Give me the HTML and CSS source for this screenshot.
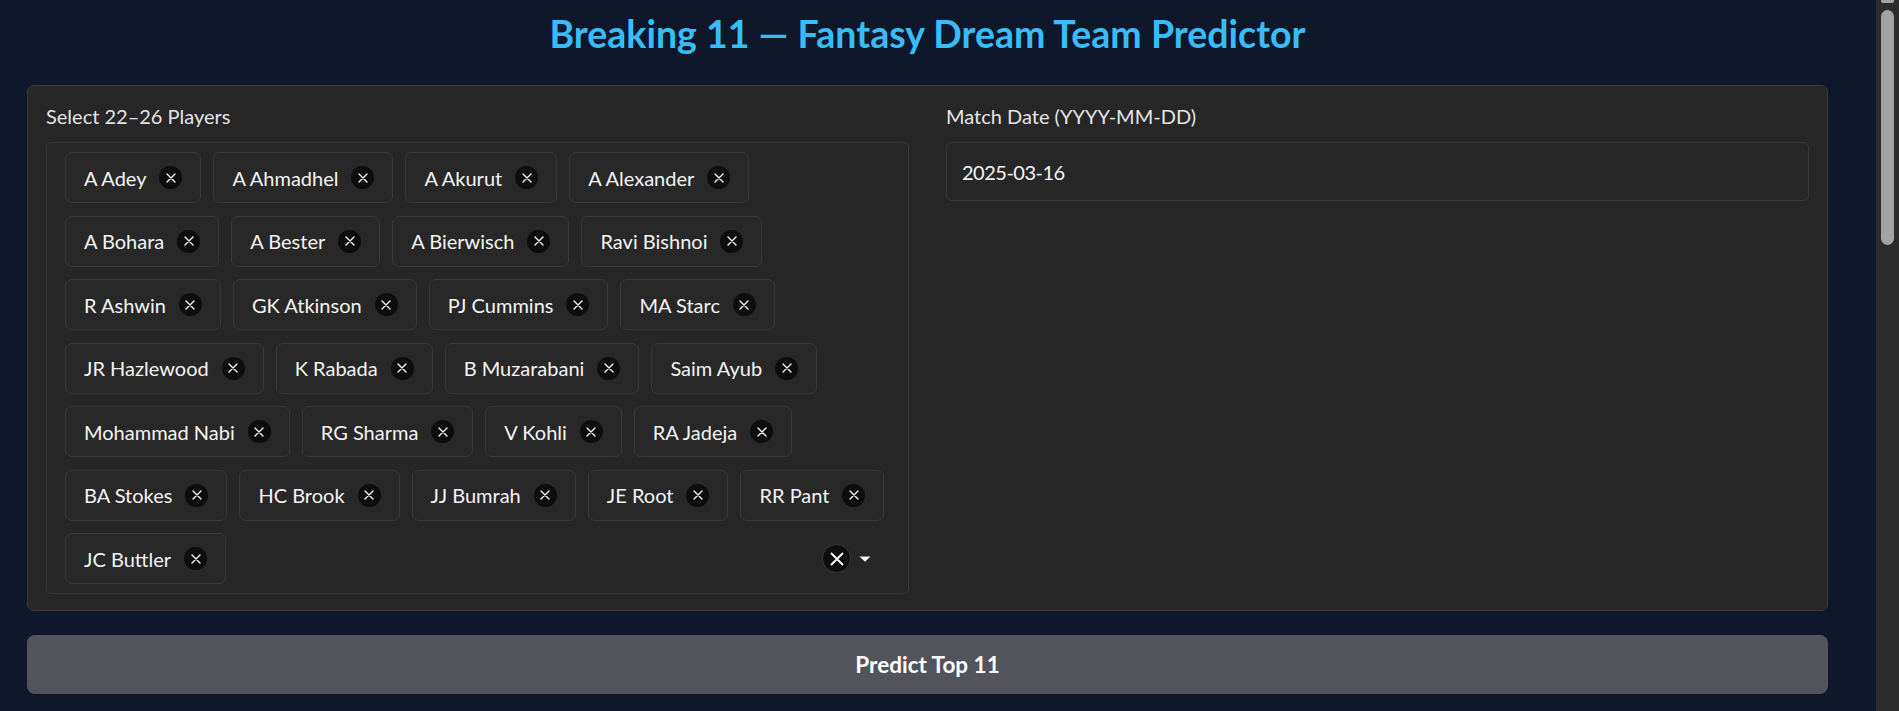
FILE: index.html
```html
<!DOCTYPE html>
<html lang="en">
<head>
<meta charset="utf-8">
<title>Breaking 11 — Fantasy Dream Team Predictor</title>
<link rel="stylesheet" href="styles.css">
</head>
<body>
<div class="page">
  <main class="app">
    <h1 class="title">Breaking 11 — Fantasy Dream Team Predictor</h1>
    <section class="panel">
      <div class="field">
        <label class="label">Select 22–26 Players</label>
        <div class="multiselect">
          <div class="row">
            <span class="chip"><span class="chip-text">A Adey</span><span class="chip-x"><svg viewBox="0 0 10 10" width="10" height="10"><path d="M1 1L9 9M9 1L1 9"/></svg></span></span>
            <span class="chip"><span class="chip-text">A Ahmadhel</span><span class="chip-x"><svg viewBox="0 0 10 10" width="10" height="10"><path d="M1 1L9 9M9 1L1 9"/></svg></span></span>
            <span class="chip"><span class="chip-text">A Akurut</span><span class="chip-x"><svg viewBox="0 0 10 10" width="10" height="10"><path d="M1 1L9 9M9 1L1 9"/></svg></span></span>
            <span class="chip"><span class="chip-text">A Alexander</span><span class="chip-x"><svg viewBox="0 0 10 10" width="10" height="10"><path d="M1 1L9 9M9 1L1 9"/></svg></span></span>
          </div>
          <div class="row">
            <span class="chip"><span class="chip-text">A Bohara</span><span class="chip-x"><svg viewBox="0 0 10 10" width="10" height="10"><path d="M1 1L9 9M9 1L1 9"/></svg></span></span>
            <span class="chip"><span class="chip-text">A Bester</span><span class="chip-x"><svg viewBox="0 0 10 10" width="10" height="10"><path d="M1 1L9 9M9 1L1 9"/></svg></span></span>
            <span class="chip"><span class="chip-text">A Bierwisch</span><span class="chip-x"><svg viewBox="0 0 10 10" width="10" height="10"><path d="M1 1L9 9M9 1L1 9"/></svg></span></span>
            <span class="chip"><span class="chip-text">Ravi Bishnoi</span><span class="chip-x"><svg viewBox="0 0 10 10" width="10" height="10"><path d="M1 1L9 9M9 1L1 9"/></svg></span></span>
          </div>
          <div class="row">
            <span class="chip"><span class="chip-text">R Ashwin</span><span class="chip-x"><svg viewBox="0 0 10 10" width="10" height="10"><path d="M1 1L9 9M9 1L1 9"/></svg></span></span>
            <span class="chip"><span class="chip-text">GK Atkinson</span><span class="chip-x"><svg viewBox="0 0 10 10" width="10" height="10"><path d="M1 1L9 9M9 1L1 9"/></svg></span></span>
            <span class="chip"><span class="chip-text">PJ Cummins</span><span class="chip-x"><svg viewBox="0 0 10 10" width="10" height="10"><path d="M1 1L9 9M9 1L1 9"/></svg></span></span>
            <span class="chip"><span class="chip-text">MA Starc</span><span class="chip-x"><svg viewBox="0 0 10 10" width="10" height="10"><path d="M1 1L9 9M9 1L1 9"/></svg></span></span>
          </div>
          <div class="row">
            <span class="chip"><span class="chip-text">JR Hazlewood</span><span class="chip-x"><svg viewBox="0 0 10 10" width="10" height="10"><path d="M1 1L9 9M9 1L1 9"/></svg></span></span>
            <span class="chip"><span class="chip-text">K Rabada</span><span class="chip-x"><svg viewBox="0 0 10 10" width="10" height="10"><path d="M1 1L9 9M9 1L1 9"/></svg></span></span>
            <span class="chip"><span class="chip-text">B Muzarabani</span><span class="chip-x"><svg viewBox="0 0 10 10" width="10" height="10"><path d="M1 1L9 9M9 1L1 9"/></svg></span></span>
            <span class="chip"><span class="chip-text">Saim Ayub</span><span class="chip-x"><svg viewBox="0 0 10 10" width="10" height="10"><path d="M1 1L9 9M9 1L1 9"/></svg></span></span>
          </div>
          <div class="row">
            <span class="chip"><span class="chip-text">Mohammad Nabi</span><span class="chip-x"><svg viewBox="0 0 10 10" width="10" height="10"><path d="M1 1L9 9M9 1L1 9"/></svg></span></span>
            <span class="chip"><span class="chip-text">RG Sharma</span><span class="chip-x"><svg viewBox="0 0 10 10" width="10" height="10"><path d="M1 1L9 9M9 1L1 9"/></svg></span></span>
            <span class="chip"><span class="chip-text">V Kohli</span><span class="chip-x"><svg viewBox="0 0 10 10" width="10" height="10"><path d="M1 1L9 9M9 1L1 9"/></svg></span></span>
            <span class="chip"><span class="chip-text">RA Jadeja</span><span class="chip-x"><svg viewBox="0 0 10 10" width="10" height="10"><path d="M1 1L9 9M9 1L1 9"/></svg></span></span>
          </div>
          <div class="row">
            <span class="chip"><span class="chip-text">BA Stokes</span><span class="chip-x"><svg viewBox="0 0 10 10" width="10" height="10"><path d="M1 1L9 9M9 1L1 9"/></svg></span></span>
            <span class="chip"><span class="chip-text">HC Brook</span><span class="chip-x"><svg viewBox="0 0 10 10" width="10" height="10"><path d="M1 1L9 9M9 1L1 9"/></svg></span></span>
            <span class="chip"><span class="chip-text">JJ Bumrah</span><span class="chip-x"><svg viewBox="0 0 10 10" width="10" height="10"><path d="M1 1L9 9M9 1L1 9"/></svg></span></span>
            <span class="chip"><span class="chip-text">JE Root</span><span class="chip-x"><svg viewBox="0 0 10 10" width="10" height="10"><path d="M1 1L9 9M9 1L1 9"/></svg></span></span>
            <span class="chip"><span class="chip-text">RR Pant</span><span class="chip-x"><svg viewBox="0 0 10 10" width="10" height="10"><path d="M1 1L9 9M9 1L1 9"/></svg></span></span>
          </div>
          <div class="row">
            <span class="chip"><span class="chip-text">JC Buttler</span><span class="chip-x"><svg viewBox="0 0 10 10" width="10" height="10"><path d="M1 1L9 9M9 1L1 9"/></svg></span></span>
            <span class="spacer"></span>
            <span class="icons">
              <span class="clear-all"><svg viewBox="0 0 14 14" width="14" height="14"><path d="M1.5 1.5L12.5 12.5M12.5 1.5L1.5 12.5"/></svg></span>
              <span class="caret"><svg viewBox="0 0 12 6" width="12" height="6"><path d="M0.5 0.5H11.5L6 5.8Z"/></svg></span>
            </span>
          </div>
        </div>
      </div>
      <div class="field">
        <label class="label">Match Date (YYYY-MM-DD)</label>
        <div class="textbox">2025-03-16</div>
      </div>
    </section>
    <button class="predict">Predict Top 11</button>
  </main>
  <div class="scrollbar">
    <div class="scroll-cap"></div>
    <div class="scroll-thumb"></div>
  </div>
</div>
</body>
</html>
```

FILE: styles.css
```css
html, body {
  margin: 0;
  padding: 0;
  height: 100%;
  overflow: hidden;
}

body {
  background: #0f172a;
  font-family: "Lato", "Noto Sans", sans-serif;
  color: #f4f4f5;
}

.page {
  display: flex;
  height: 711px;
}

.app {
  flex: 1;
  min-width: 0;
  padding: 12px 48px 0 27px;
  display: flex;
  flex-direction: column;
}

.title {
  margin: 0 0 29px 0;
  font-size: 37.5px;
  line-height: 44px;
  font-weight: 700;
  color: #38bdf8;
  text-align: center;
}

.panel {
  display: grid;
  grid-template-columns: minmax(0, 1fr) minmax(0, 1fr);
  column-gap: 37px;
  align-items: start;
  background: #272727;
  border: 1px solid #3b3b3b;
  border-radius: 7px;
  padding: 16px 18px 16px 18px;
}

.field {
  display: flex;
  flex-direction: column;
  gap: 12px;
  min-width: 0;
}

.label {
  font-size: 20px;
  line-height: 28px;
  color: #e4e4e7;
}

.multiselect {
  border: 1px solid #3b3b3b;
  border-radius: 6px;
  padding: 9px 18px;
  display: flex;
  flex-direction: column;
  gap: 12.5px;
}

.row {
  display: flex;
  gap: 12px;
  align-items: center;
}

.chip {
  display: flex;
  align-items: center;
  gap: 13px;
  height: 51px;
  box-sizing: border-box;
  padding: 0 18px;
  border: 1px solid #3b3b3b;
  border-radius: 7px;
  background: #282828;
}

.chip-text {
  font-size: 20px;
  line-height: 24px;
  color: #f4f4f5;
  white-space: nowrap;
}

.chip-x {
  width: 23px;
  height: 23px;
  border-radius: 50%;
  background: #0d0d0d;
  display: flex;
  align-items: center;
  justify-content: center;
}

.chip-x svg path {
  stroke: #f4f4f5;
  stroke-width: 1.4;
  stroke-linecap: round;
  fill: none;
}

.spacer {
  flex: 1;
}

.icons {
  display: flex;
  align-items: center;
  gap: 8px;
  margin-right: 19px;
}

.clear-all {
  width: 29px;
  height: 29px;
  box-sizing: border-box;
  border-radius: 50%;
  border: 1px solid #3a3a3a;
  background: #0d0d0d;
  display: flex;
  align-items: center;
  justify-content: center;
}

.clear-all svg path {
  stroke: #ffffff;
  stroke-width: 1.8;
  stroke-linecap: round;
  fill: none;
}

.caret {
  display: flex;
  align-items: center;
}

.caret svg path {
  fill: #f4f4f5;
}

.textbox {
  height: 59px;
  box-sizing: border-box;
  border: 1px solid #3b3b3b;
  border-radius: 6px;
  padding: 0 15px;
  display: flex;
  align-items: center;
  font-size: 20px;
  letter-spacing: -0.5px;
  color: #f4f4f5;
}

.predict {
  margin-top: 24px;
  height: 59px;
  width: 100%;
  border: none;
  border-radius: 8px;
  background: #52535b;
  color: #ffffff;
  font-family: "Lato", "Noto Sans", sans-serif;
  font-size: 22.5px;
  font-weight: 700;
}

.scrollbar {
  width: 23px;
  background: #2c2c2c;
  display: flex;
  flex-direction: column;
  align-items: center;
}

.scroll-cap {
  width: 13px;
  height: 3px;
  background: #a3a3a3;
  border-radius: 0 0 2px 2px;
}

.scroll-thumb {
  margin-top: 7px;
  width: 13px;
  height: 235px;
  background: #a3a3a3;
  border-radius: 7px;
}
```
